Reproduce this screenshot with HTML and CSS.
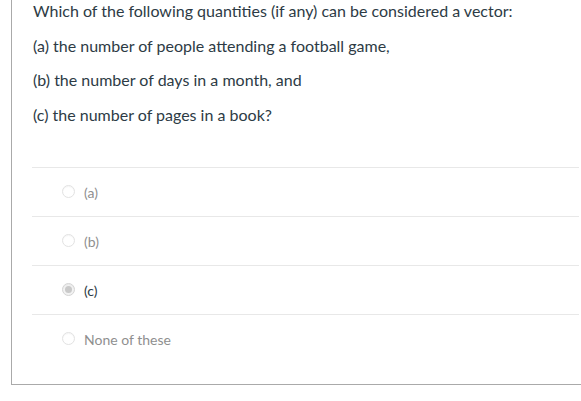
FILE: index.html
```html
<!DOCTYPE html>
<html>
<head>
<meta charset="utf-8">
<link rel="stylesheet" href="styles.css">
</head>
<body>
<div class="frame">
  <div class="question">
    <p>Which of the following quantities (if any) can be considered a vector:</p>
    <p>(a) the number of people attending a football game,</p>
    <p>(b) the number of days in a month, and</p>
    <p>(c) the number of pages in a book?</p>
  </div>
  <div class="answers">
    <div class="answer">
      <span class="radio"></span><span class="label">(a)</span>
    </div>
    <div class="answer">
      <span class="radio"></span><span class="label">(b)</span>
    </div>
    <div class="answer selected">
      <span class="radio checked"></span><span class="label">(c)</span>
    </div>
    <div class="answer">
      <span class="radio"></span><span class="label">None of these</span>
    </div>
  </div>
</div>
</body>
</html>
```

FILE: styles.css
```css
html, body {
  margin: 0;
  padding: 0;
  overflow: hidden;
  background: #fff;
}
body {
  font-family: Lato, "Open Sans", sans-serif;
  color: #2d3b45;
}
.frame {
  margin-left: 11px;
  margin-top: -12px;
  border-left: 1px solid #aaaaaa;
  border-bottom: 1px solid #aaaaaa;
  padding: 0 2px 21px 20px;
}
.question {
  font-size: 16px;
  padding-bottom: 29px;
}
.question p {
  margin: 12px 0;
  line-height: 22.5px;
  padding-left: 1px;
}
.answers {
  display: flex;
  flex-direction: column;
}
.answer {
  border-top: 1px solid #e8e8e8;
  height: 48px;
  display: flex;
  align-items: center;
  padding-left: 30px;
  gap: 9px;
  font-size: 14px;
  color: #8f8f8f;
}
.answer.selected {
  color: #2d3b45;
}
.radio {
  width: 11px;
  height: 11px;
  border-radius: 50%;
  border: 1px solid #e2e2e2;
  background: #fff;
  box-shadow: inset 0 1px 1px rgba(0,0,0,0.04);
  box-sizing: content-box;
  position: relative;
  margin-top: -1px;
}
.radio.checked {
  background: #f2f2f2;
  border-color: #d4d4d4;
}
.radio.checked::after {
  content: "";
  position: absolute;
  left: 2px;
  top: 2px;
  width: 7px;
  height: 7px;
  border-radius: 50%;
  background: #c9c9c9;
}
```
